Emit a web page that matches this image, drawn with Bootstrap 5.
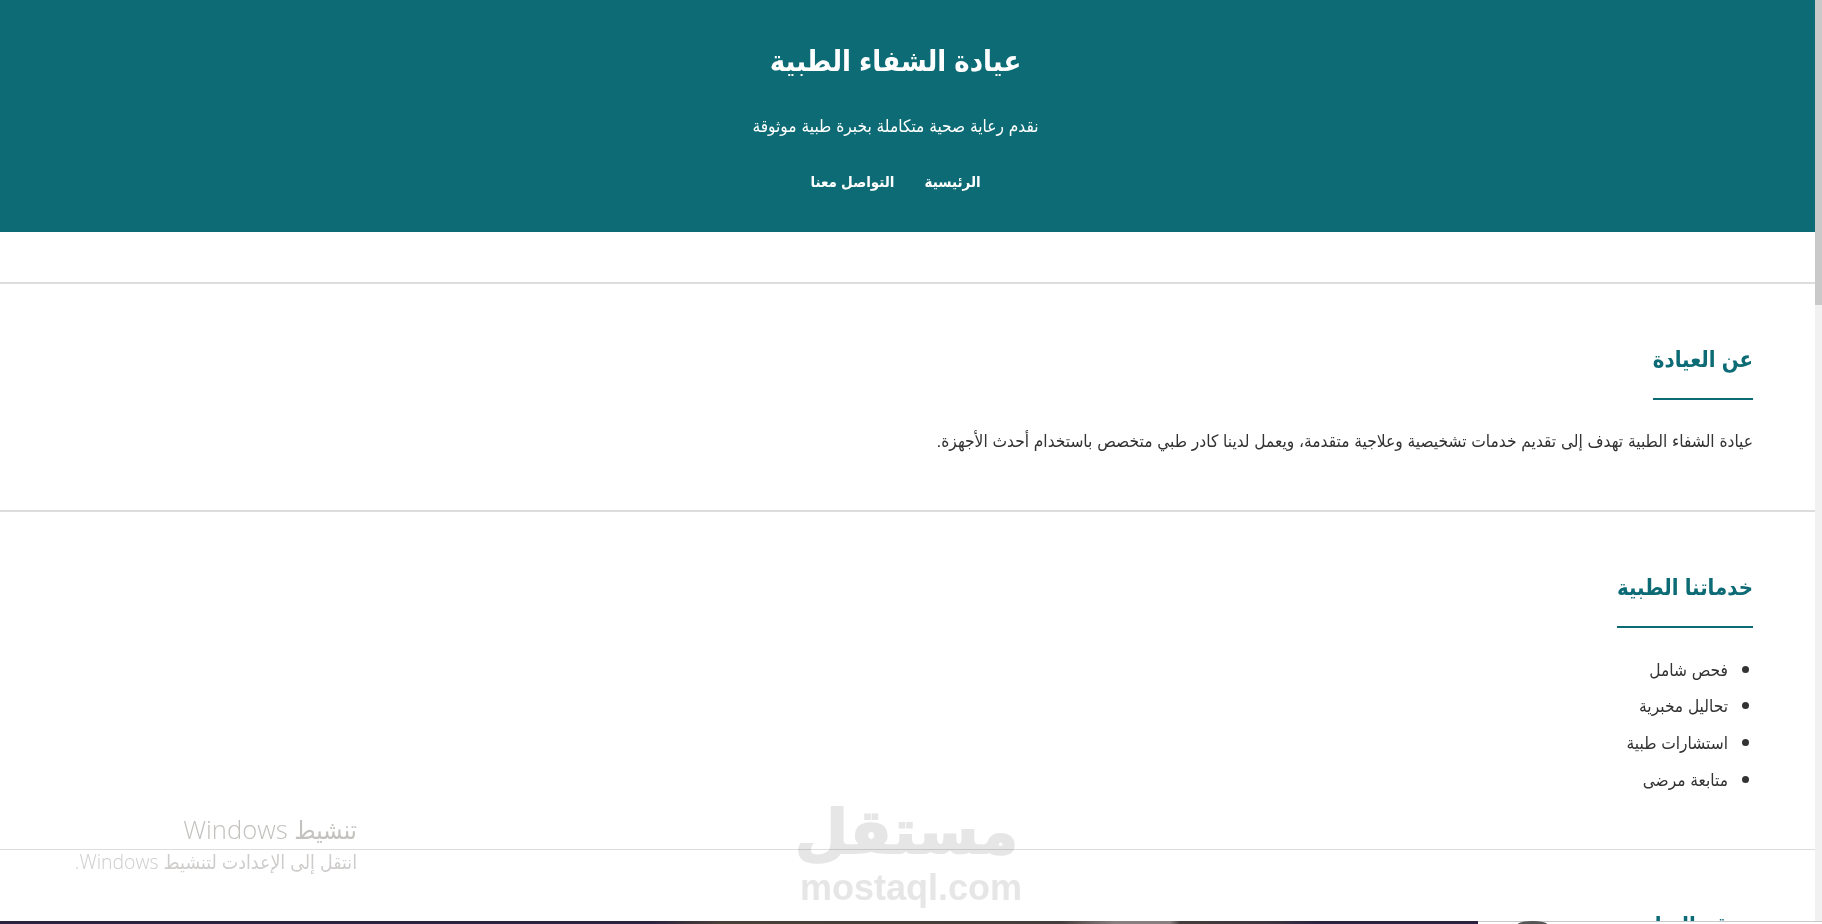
<!DOCTYPE html>
<html lang="ar" dir="rtl">
<head>
<meta charset="utf-8">
<title>عيادة الشفاء الطبية</title>
<link rel="stylesheet" href="https://cdn.jsdelivr.net/npm/bootstrap@5.3.0/dist/css/bootstrap.min.css">
<style>
html,body{height:100%;overflow:hidden}
body{font-family:"Liberation Sans","DejaVu Sans Condensed","DejaVu Sans",sans-serif;font-size:17.2px;color:#333;background:#fff}
.page{height:924px;overflow:hidden;position:relative;padding-right:7px}
.hero{background:#0c6b75;color:#fff;height:232px;padding:39px 24px 0 0}
.hero h1{font-size:29px;font-weight:700;margin:0 0 31px;line-height:44px}
.hero p{margin:0 0 32px;line-height:24px}
.hero-nav{gap:30px;font-weight:700;font-size:15px;line-height:24px}
.hero-nav a{color:#fff;text-decoration:none}
.gap-top{height:50px}
.sec{border-top:2px solid #ddd;padding:60px 62px 57px}
.sec-thin{border-top-width:1px}
.sec h2{display:inline-block;color:#0c6b75;font-size:22px;font-weight:700;border-bottom:2px solid #0c6b75;padding-bottom:22px;margin:0 0 29px;line-height:32px;vertical-align:top}
.sec p{margin:0;line-height:24px}
.sec ul{margin:-1.5px 0 0;line-height:24px;padding-right:25px}
.sec li{margin-bottom:10.7px}
.sec li:last-child{margin-bottom:0}
.sec li::marker{font-size:24px}
.sb{position:absolute;top:0;right:0;width:7px;height:924px;background:#f1f1f1}
.sb i{display:block;height:305px;background:#c9c9c9}
.win-note{position:absolute;left:0;top:815px;width:357px;text-align:right;line-height:1.2;font-family:"Open Sans","DejaVu Sans Condensed",sans-serif}
.win-title{font-size:25.6px;color:#c4c2bf;font-weight:300}
.win-sub{font-size:19.4px;color:#cfcdcc;font-weight:300;margin-top:4px}
.mq{position:absolute;left:800px;top:790px;width:218px;text-align:center;color:#e6e6e6;mix-blend-mode:multiply;pointer-events:none}
.mq-ar{font-family:"DejaVu Sans",sans-serif;font-size:61px;font-weight:700;line-height:84px;height:84px;white-space:nowrap;-webkit-text-stroke:2px #e6e6e6}
.mq-en{font-family:"Liberation Sans",sans-serif;font-size:36px;font-weight:700;line-height:36px;direction:ltr;margin-top:-4px}
.strip{position:absolute;left:0;bottom:0;width:1478px;height:3px;background:linear-gradient(90deg,#2c2240 0,#2c2240 650px,#4a3f38 720px,#453d3b 1060px,#8a7f7f 1115px,#8a7f7f 1170px,#453d3b 1180px,#3d3440 1270px,#2c2240 1320px)}
.strip-rest{position:absolute;left:1478px;bottom:0;width:344px;height:3px;background:#fff;border-top:1px solid #c9c9c9}
.arc{position:absolute;left:1518px;bottom:0;width:29px;height:3px;background:#555;border-radius:50% 50% 0 0/100% 100% 0 0}
</style>
</head>
<body>
<div class="page">
<header class="hero text-center">
<h1>عيادة الشفاء الطبية</h1>
<p>نقدم رعاية صحية متكاملة بخبرة طبية موثوقة</p>
<nav class="hero-nav d-flex justify-content-center"><a href="#">الرئيسية</a><a href="#">التواصل معنا</a></nav>
</header>
<div class="gap-top"></div>
<section class="sec"><h2>عن العيادة</h2><p>عيادة الشفاء الطبية تهدف إلى تقديم خدمات تشخيصية وعلاجية متقدمة، ويعمل لدينا كادر طبي متخصص باستخدام أحدث الأجهزة.</p></section>
<section class="sec"><h2>خدماتنا الطبية</h2><ul><li>فحص شامل</li><li>تحاليل مخبرية</li><li>استشارات طبية</li><li>متابعة مرضى</li></ul></section>
<section class="sec sec-thin"><h2>موقع العيادة</h2></section>
<div class="win-note"><div class="win-title">تنشيط Windows</div><div class="win-sub">انتقل إلى الإعدادت لتنشيط Windows.</div></div>
<div class="mq"><div class="mq-ar">مستقل</div><div class="mq-en">mostaql.com</div></div>
<div class="sb"><i></i></div>
<div class="strip"></div>
<div class="strip-rest"></div>
<div class="arc"></div>
</div>
</body>
</html>
